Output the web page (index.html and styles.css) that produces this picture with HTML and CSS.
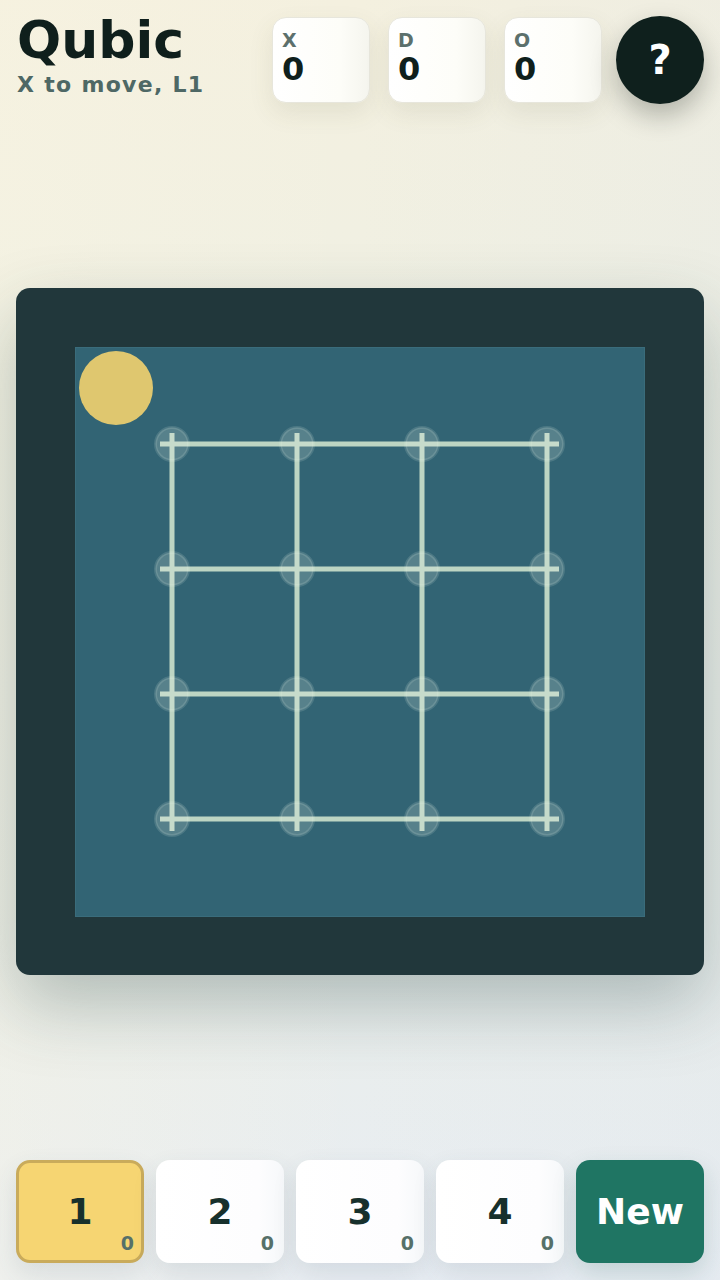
FILE: index.html
```html
<!DOCTYPE html>
<html lang="en">
<head>
<meta charset="utf-8">
<title>Qubic</title>
<link rel="stylesheet" href="styles.css">
</head>
<body>
<div class="app">
  <header class="top">
    <div class="titles">
      <h1 class="title">Qubic</h1>
      <p class="status">X to move, L1</p>
    </div>
    <div class="right">
      <div class="scores">
        <div class="card"><span class="label">X</span><span class="value">0</span></div>
        <div class="card"><span class="label">D</span><span class="value">0</span></div>
        <div class="card"><span class="label">O</span><span class="value">0</span></div>
      </div>
      <button class="help">?</button>
    </div>
  </header>

  <main class="stage">
    <div class="board">
      <svg class="plane" width="570" height="570" viewBox="0 0 570 570">
        <rect x="0.5" y="0.5" width="569" height="569" fill="#326474" stroke="#3a6c7b" stroke-width="1"/>
        <circle cx="41" cy="41" r="37" fill="#dfc76f"/>
        <g stroke="#bdd5c3" stroke-width="5">
          <line x1="97" y1="86" x2="97" y2="484"/>
          <line x1="222" y1="86" x2="222" y2="484"/>
          <line x1="347" y1="86" x2="347" y2="484"/>
          <line x1="472" y1="86" x2="472" y2="484"/>
          <line x1="85" y1="97" x2="484" y2="97"/>
          <line x1="85" y1="222" x2="484" y2="222"/>
          <line x1="85" y1="347" x2="484" y2="347"/>
          <line x1="85" y1="472" x2="484" y2="472"/>
        </g>
        <g fill="rgba(235,245,235,0.2)" stroke="rgba(235,245,235,0.14)" stroke-width="3">
          <circle cx="97" cy="97" r="16.5"/><circle cx="222" cy="97" r="16.5"/><circle cx="347" cy="97" r="16.5"/><circle cx="472" cy="97" r="16.5"/>
          <circle cx="97" cy="222" r="16.5"/><circle cx="222" cy="222" r="16.5"/><circle cx="347" cy="222" r="16.5"/><circle cx="472" cy="222" r="16.5"/>
          <circle cx="97" cy="347" r="16.5"/><circle cx="222" cy="347" r="16.5"/><circle cx="347" cy="347" r="16.5"/><circle cx="472" cy="347" r="16.5"/>
          <circle cx="97" cy="472" r="16.5"/><circle cx="222" cy="472" r="16.5"/><circle cx="347" cy="472" r="16.5"/><circle cx="472" cy="472" r="16.5"/>
        </g>
      </svg>
    </div>
  </main>

  <footer class="levels">
    <button class="lvl active"><span class="num">1</span><span class="cnt">0</span></button>
    <button class="lvl"><span class="num">2</span><span class="cnt">0</span></button>
    <button class="lvl"><span class="num">3</span><span class="cnt">0</span></button>
    <button class="lvl"><span class="num">4</span><span class="cnt">0</span></button>
    <button class="new">New</button>
  </footer>
</div>
</body>
</html>
```

FILE: styles.css
```css
* { box-sizing: border-box; }
html, body { margin: 0; padding: 0; }
body {
  width: 720px;
  height: 1280px;
  font-family: "DejaVu Sans", "Noto Sans", sans-serif;
  background:
    linear-gradient(90deg, rgba(250, 245, 225, 0.35) 0%, rgba(250, 245, 225, 0) 50%, rgba(220, 228, 235, 0.2) 100%),
    linear-gradient(180deg, #f4f0df 0%, #eff0e4 30%, #eaeee9 70%, #e8edf3 100%);
  color: #0f1f1c;
  overflow: hidden;
}
.app {
  height: 1280px;
  display: flex;
  flex-direction: column;
  padding: 16px 16px 17px;
}
.top {
  display: flex;
  justify-content: space-between;
  align-items: flex-start;
  height: 88px;
}
.titles { margin-top: -2px; padding-left: 1px; }
.title {
  margin: 0;
  font-size: 52px;
  line-height: 1;
  font-weight: bold;
  color: #0f1f1c;
}
.status {
  margin: 8px 0 0;
  font-size: 22px;
  line-height: 1;
  font-weight: bold;
  letter-spacing: 1.3px;
  color: #4e6865;
}
.right {
  display: flex;
  align-items: center;
  gap: 14px;
  height: 88px;
}
.scores { display: flex; gap: 18px; }
.card {
  width: 98px;
  height: 86px;
  border-radius: 14px;
  background: linear-gradient(90deg, #ffffff 0%, #fdfdf8 70%, #f5f5ee 100%);
  border: 1px solid #e7e6dc;
  box-shadow: 0 10px 24px rgba(90, 90, 50, 0.10);
  padding: 13px 9px 0;
  display: flex;
  flex-direction: column;
}
.label {
  font-size: 19px;
  line-height: 1;
  font-weight: bold;
  color: #5c706c;
}
.value {
  margin-top: 3px;
  font-size: 32px;
  line-height: 1;
  font-weight: bold;
  color: #0f1f1c;
}
.help {
  width: 88px;
  height: 88px;
  border-radius: 50%;
  border: none;
  background: #0f201d;
  color: #ffffff;
  font-family: "DejaVu Sans", sans-serif;
  font-size: 40px;
  font-weight: bold;
  line-height: 1;
  padding: 0;
  box-shadow: 0 12px 26px rgba(20, 30, 20, 0.28);
}
.stage {
  flex: 1;
  display: flex;
  align-items: center;
  justify-content: center;
  padding-bottom: 1px;
}
.board {
  width: 688px;
  height: 687px;
  padding: 59px 59px 58px;
  border-radius: 14px;
  background: #21373b;
  box-shadow: 0 30px 70px rgba(40, 70, 70, 0.30);
}
.plane { display: block; }
.levels {
  display: grid;
  grid-template-columns: repeat(5, 1fr);
  gap: 12px;
  height: 103px;
}
.lvl, .new {
  position: relative;
  border-radius: 14px;
  font-family: "DejaVu Sans", sans-serif;
  font-weight: bold;
  padding: 0;
}
.lvl {
  background: linear-gradient(90deg, #ffffff 0%, #fdfdfe 80%, #f6f8fa 100%);
  border: none;
  box-shadow: 0 10px 24px rgba(60, 80, 100, 0.12);
  color: #17302c;
}
.lvl.active {
  background: #f6d572;
  border: 3px solid #c9ab5b;
}
.num {
  font-size: 36px;
  line-height: 1;
}
.cnt {
  position: absolute;
  right: 10px;
  bottom: 10px;
  font-size: 19px;
  line-height: 1;
  color: #567069;
}
.lvl.active .cnt { right: 7px; bottom: 7px; }
.new {
  background: #1f7563;
  border: none;
  color: #ffffff;
  font-size: 36px;
  box-shadow: 0 10px 24px rgba(30, 90, 80, 0.18);
}
```
